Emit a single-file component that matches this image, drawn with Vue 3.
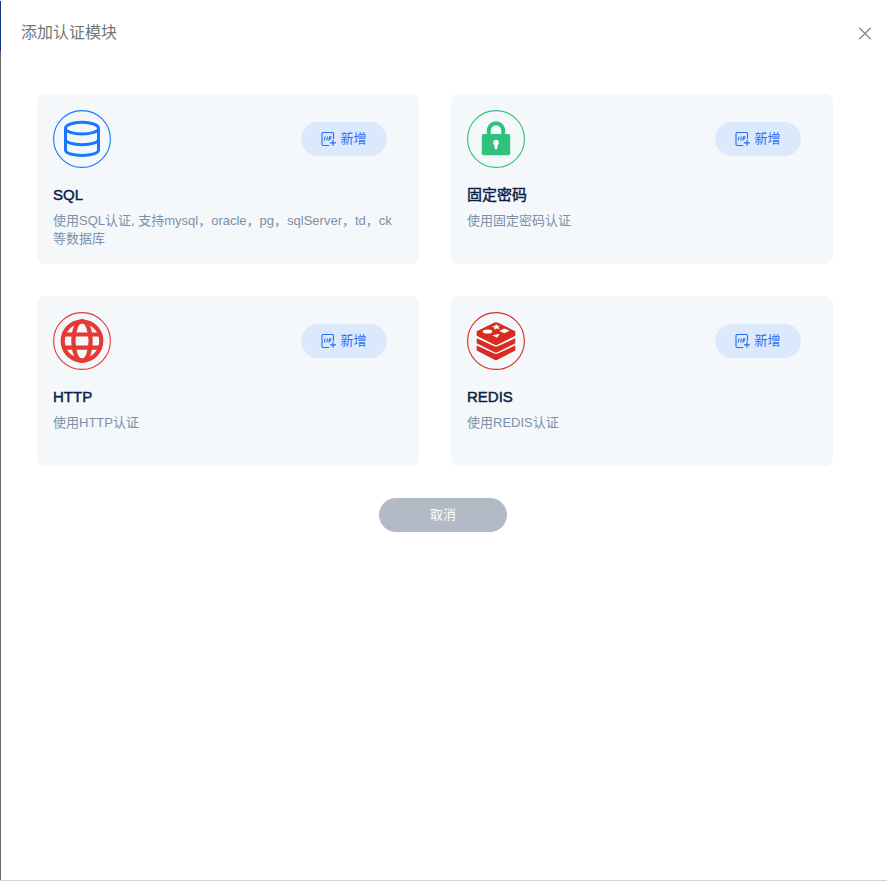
<script setup>
const modules = [
  { key: 'sql', title: 'SQL', desc: '使用SQL认证, 支持mysql，oracle，pg，sqlServer，td，ck等数据库' },
  { key: 'lock', title: '固定密码', desc: '使用固定密码认证' },
  { key: 'http', title: 'HTTP', desc: '使用HTTP认证' },
  { key: 'redis', title: 'REDIS', desc: '使用REDIS认证' },
]
</script>

<template>
  <div class="page">
    <div class="backdrop"></div>
    <section class="drawer">
      <header class="header">
        <span class="heading">添加认证模块</span>
        <button class="close" aria-label="close">
          <svg width="14" height="14" viewBox="0 0 14 14"><path d="M1.200 1.700l11.600 11.600M12.800 1.700L1.200 13.300" fill="none" stroke="#85888e" stroke-width="1.300" /></svg>
        </button>
      </header>
      <div class="grid">
        <article v-for="m in modules" :key="m.key" class="card">
          <div class="top">
            <svg v-if="m.key === 'sql'" class="icon" viewBox="0 0 58 58">
              <circle cx="29" cy="29" r="28.400" fill="none" stroke="#1677ff" stroke-width="1.100" />
              <g fill="none" stroke="#1677ff" stroke-width="3">
                <ellipse cx="29" cy="18.200" rx="16.500" ry="5.900" />
                <path d="M12.500 18.200V40c0 3.200 7.200 5.500 16.500 5.500S45.500 43.200 45.500 40V18.200M12.500 29.200c0 3.200 7.200 5.500 16.500 5.500S45.500 32.400 45.500 29.200" />
              </g>
            </svg>
            <svg v-else-if="m.key === 'lock'" class="icon" viewBox="0 0 58 58">
              <circle cx="29" cy="29" r="28.400" fill="none" stroke="#30c27c" stroke-width="1.100" />
              <path d="M21.800 26v-5.600a7.200 7.200 0 0 1 14.400 0V26" fill="none" stroke="#30c27c" stroke-width="4" />
              <rect x="14.800" y="24" width="28.400" height="21.200" rx="2" fill="#30c27c" />
              <path d="M29 29.800a3 3 0 0 0-1.400 5.600V38a1.400 1.400 0 0 0 2.800 0v-2.600A3 3 0 0 0 29 29.800z" fill="#fff" />
            </svg>
            <svg v-else-if="m.key === 'http'" class="icon" viewBox="0 0 58 58">
              <circle cx="29" cy="29" r="28.400" fill="none" stroke="#e53935" stroke-width="1.100" />
              <g fill="none" stroke="#e53935" stroke-width="4.200">
                <circle cx="29" cy="29" r="19.300" />
                <ellipse cx="29" cy="29" rx="8.600" ry="20" />
                <path d="M10 22.500h38M10 35.700h38" />
              </g>
            </svg>
            <svg v-else class="icon" viewBox="0 0 58 58">
              <circle cx="29" cy="29" r="28.400" fill="none" stroke="#d82c20" stroke-width="1.100" />
              <g fill="#d82c20">
                <path d="M9.700 33.500l17 7.800q2.300 1 4.600 0l17-7.800v5L31 47.600q-2 1-4 0L9.700 38.500z" />
                <path d="M9.700 26.200l17 7.800q2.300 1 4.600 0l17-7.800v5L31 40.100q-2 1-4 0L9.700 31.200z" />
                <path d="M9.700 19.200l17.200-8.400q2.100-1 4.200 0l17.200 8.400v4.600L31 32.500q-2 1-4 0L9.700 23.800z" />
              </g>
              <g fill="#fff">
                <ellipse cx="20.500" cy="19.400" rx="4.800" ry="2" />
                <path d="M29.300 12l1 1.900 3-.4-2 1.600 1.600 1.900-3.200-.6-2.500 1.400.3-2.100-2.800-1.100 3.200-.5zM37.300 16.500l5.300 2.300-5.300 2.400-5-2.300zM25.300 23.300l7.400-1.500-2.500 4z" />
              </g>
            </svg>
            <button class="add">
              <svg width="16" height="16" viewBox="0 0 16 16" fill="none" stroke="#2b6cf6">
                <path d="M8.200 14.500H2a1 1 0 0 1-1-1V2.500a1 1 0 0 1 1-1h9.500a1 1 0 0 1 1 1V8" stroke-width="1.100" />
                <path d="M4 5.500l-.7 4M6.500 5.500l-.7 4M7.800 9.600l.8-3.700h2M8.200 7.600h1.800" stroke-width="1.100" />
                <path d="M12 8.800v6M9 11.800h6" stroke-width="1.200" />
              </svg>
              <span>新增</span>
            </button>
          </div>
          <h3 class="title">{{ m.title }}</h3>
          <p class="desc">{{ m.desc }}</p>
        </article>
      </div>
      <footer class="footer"><button class="cancel">取消</button></footer>
    </section>
  </div>
</template>

<style>
body { margin: 0; background: #fff; }
</style>

<style scoped>
.page {
  display: flex;
  box-sizing: border-box;
  height: 881px;
  border-bottom: 1px solid #d2d2d2;
  font-family: "Liberation Sans", "Noto Sans CJK SC", sans-serif;
}
.backdrop {
  width: 1px;
  background: linear-gradient(#fff 0 1px, #10357f 1px 51px, #666 51px);
}
.drawer { flex: 1; }
.header {
  display: flex;
  justify-content: space-between;
  align-items: center;
  height: 66px;
  padding: 0 15px 0 20px;
  box-sizing: border-box;
}
.heading { font-size: 16px; line-height: 24px; color: #72767b; }
button { border: 0; font-family: inherit; }
.close { display: flex; padding: 0; background: none; }
.grid {
  display: grid;
  grid-template-columns: 382px 382px;
  grid-auto-rows: 170px;
  gap: 32px;
  padding: 28px 36px 0;
}
.card {
  box-sizing: border-box;
  padding: 16px;
  border-radius: 8px;
  background: #f4f8fb;
}
.top { display: flex; justify-content: space-between; align-items: center; padding-right: 16px; }
.icon { width: 58px; height: 58px; }
.add {
  display: flex;
  align-items: center;
  justify-content: center;
  gap: 3px;
  width: 86px;
  height: 34px;
  padding: 0;
  border-radius: 17px;
  background: #dce8fb;
  color: #2b6cf6;
  font-size: 13px;
}
.add span { padding-bottom: 4px; }
.title {
  margin: 16px 0 0;
  font-size: 15px;
  line-height: 22px;
  font-weight: 400;
  color: #0b1d48;
  -webkit-text-stroke: 0.45px #0b1d48;
}
.desc { margin: 6px 0 0; font-size: 13px; line-height: 18px; color: #7d8fa9; }
.footer { display: flex; padding: 32px 0 0 378px; }
.cancel {
  width: 128px;
  height: 34px;
  padding: 0 0 4px;
  border-radius: 17px;
  background: #b2bac5;
  color: #fff;
  font-size: 13px;
}
</style>
